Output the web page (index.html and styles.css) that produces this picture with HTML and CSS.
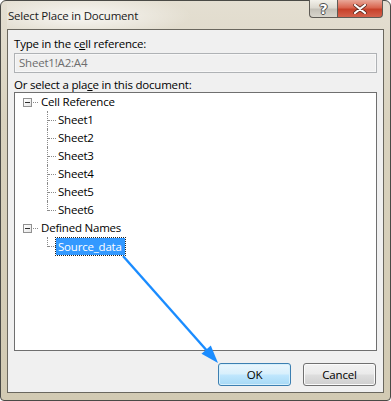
FILE: index.html
```html
<!DOCTYPE html>
<html lang="en">
<head>
  <meta charset="UTF-8">
  <title>Select Place in Document</title>
  <link rel="stylesheet" href="styles.css">
</head>
<body>
  <div class="window">
    <div class="titlebar">
      <span class="title">Select Place in Document</span>
      <div class="caption-buttons">
        <span class="cap-btn help">?</span>
        <span class="cap-btn close">
          <svg width="14" height="10" viewBox="0 0 14 10">
            <path d="M2 1 L12 9 M12 1 L2 9" stroke="#5a2a20" stroke-width="3.6" stroke-linecap="round"/>
            <path d="M2 1 L12 9 M12 1 L2 9" stroke="#ffffff" stroke-width="2.2" stroke-linecap="round"/>
          </svg>
        </span>
      </div>
    </div>

    <div class="client">
      <label class="label">Type in the c<u>e</u>ll reference:</label>
      <div class="textbox">Sheet1!A2:A4</div>

      <label class="label second">Or select a pla<u>c</u>e in this document:</label>
      <div class="tree">
        <div class="node">
          <span class="expander"></span>
          <span class="stub"></span>
          <span class="text">Cell Reference</span>
        </div>
        <div class="child"><span class="branch"></span><span class="text">Sheet1</span></div>
        <div class="child"><span class="branch"></span><span class="text">Sheet2</span></div>
        <div class="child"><span class="branch"></span><span class="text">Sheet3</span></div>
        <div class="child"><span class="branch"></span><span class="text">Sheet4</span></div>
        <div class="child"><span class="branch"></span><span class="text">Sheet5</span></div>
        <div class="child last"><span class="branch"></span><span class="text">Sheet6</span></div>
        <div class="node">
          <span class="expander"></span>
          <span class="stub"></span>
          <span class="text">Defined Names</span>
        </div>
        <div class="child last"><span class="branch"></span><span class="text selected">Source_data</span></div>
      </div>

      <div class="actions">
        <button class="btn default">OK</button>
        <button class="btn">Cancel</button>
      </div>
    </div>
  </div>

  <!-- callout arrow drawn over the dialog -->
  <svg class="callout" width="391" height="401" viewBox="0 0 391 401">
    <line x1="123" y1="256" x2="209" y2="353" stroke="#1a8cff" stroke-width="2.4"/>
    <polygon points="218,363 201.5,353.8 210.8,345.5" fill="#1a8cff"/>
  </svg>
</body>
</html>
```

FILE: styles.css
```css
html, body {
  margin: 0;
  padding: 0;
}

body {
  width: 391px;
  height: 401px;
  position: relative;
  background: #ffffff;
  font-family: "Segoe UI", "Open Sans", "Noto Sans", sans-serif;
  font-size: 11.5px;
  letter-spacing: -0.2px;
  color: #000000;
  overflow: hidden;
}

.window {
  box-sizing: border-box;
  width: 391px;
  height: 401px;
  border: 1px solid #4a4a46;
  border-radius: 6px 6px 4px 4px;
  padding: 0 6px 7px 6px;
  background: linear-gradient(180deg, #e4dfd2 0%, #d9d2be 30%, #d2cab3 100%);
  display: flex;
  flex-direction: column;
}

.titlebar {
  height: 28px;
  display: flex;
  align-items: flex-start;
  justify-content: space-between;
  background: radial-gradient(ellipse 110px 22px at 75px 15px, rgba(255, 255, 255, 0.75), rgba(255, 255, 255, 0) 100%);
}

.title {
  margin-top: 6px;
  padding-left: 1px;
  font-size: 11.5px;
  line-height: 17px;
  color: #1a1a1a;
}

.caption-buttons {
  display: flex;
  margin-top: -1px;
  margin-right: 1px;
}

.cap-btn {
  height: 18px;
  display: flex;
  align-items: center;
  justify-content: center;
  border: 1px solid #5e5b55;
  border-top: none;
  box-sizing: border-box;
}

.help {
  width: 28px;
  border-right: none;
  border-radius: 0 0 0 4px;
  background: linear-gradient(180deg, #f3f1ea 0%, #dcd9d0 45%, #c4c1b8 55%, #d8d5cc 100%);
  color: #ffffff;
  font-family: "DejaVu Sans", sans-serif;
  font-weight: bold;
  font-size: 14px;
  letter-spacing: 0;
  text-shadow: 0 0 1px #333, 1px 0 0 #555, -1px 0 0 #555, 0 1px 0 #555, 0 -1px 0 #555;
}

.close {
  width: 46px;
  border-radius: 0 0 4px 0;
  background: linear-gradient(180deg, #e9a899 0%, #d9654f 45%, #c7412a 55%, #d4634d 100%);
}

.client {
  flex: 1;
  background: #f0f0f0;
  border: 1px solid #6a675e;
  padding: 6px 6px 5px 6px;
  display: flex;
  flex-direction: column;
}

.label {
  display: block;
  line-height: 16px;
  height: 16px;
}

.label.second {
  margin-top: 4px;
  height: 15px;
  line-height: 15px;
}

.textbox {
  margin-top: 1px;
  height: 20px;
  box-sizing: border-box;
  border: 1px solid #afb2b5;
  box-shadow: inset 0 0 0 1px #f7f7f7;
  background: #f0f0f0;
  color: #6d6d6d;
  padding-left: 4px;
  line-height: 17px;
}

.tree {
  margin-top: 0;
  height: 259px;
  box-sizing: border-box;
  border: 1px solid #6f6f6f;
  background: #ffffff;
  padding-left: 8px;
}

.node {
  height: 18px;
  display: flex;
  align-items: center;
}

.expander {
  width: 9px;
  height: 9px;
  box-sizing: border-box;
  border: 1px solid #919191;
  background: linear-gradient(135deg, #ffffff 0%, #e6e6e6 100%);
  position: relative;
}

.expander::after {
  content: "";
  position: absolute;
  left: 1px;
  top: 3px;
  width: 5px;
  height: 1px;
  background: #2e2e2e;
}

.stub {
  width: 5px;
  border-top: 1px dotted #8a8a8a;
  margin-left: 1px;
}

.node .text {
  margin-left: 1px;
}

.text {
  line-height: 16px;
  padding: 0 2px;
  white-space: nowrap;
}

.child {
  height: 18px;
  display: flex;
  align-items: flex-start;
  padding-left: 24px;
}

.branch {
  width: 9px;
  height: 18px;
  box-sizing: border-box;
  border-left: 1px dotted #8a8a8a;
}

.branch::after {
  content: "";
  display: block;
  margin-top: 9px;
  border-top: 1px dotted #8a8a8a;
}

.child.last .branch {
  height: 10px;
}

.child .text {
  margin-top: 1px;
  margin-left: 0;
}

.selected {
  background: #3399ff;
  color: #ffffff;
  outline: 1px dotted #222222;
  outline-offset: 0;
  line-height: 17px;
  padding: 0 3px 0 2px;
}

.actions {
  margin-top: 12px;
  display: flex;
  justify-content: flex-end;
  gap: 12px;
  padding-right: 1px;
}

.btn {
  width: 73px;
  height: 23px;
  border: 1px solid #707070;
  border-radius: 3px;
  background: linear-gradient(180deg, #f2f2f2 0%, #ebebeb 45%, #dddddd 55%, #cfcfcf 100%);
  box-shadow: inset 0 0 0 1px #fbfbfb;
  font-family: inherit;
  font-size: 11.5px;
  letter-spacing: -0.2px;
  color: #000000;
  padding: 0;
}

.btn.default {
  border-color: #3c7fb1;
  background: linear-gradient(180deg, #eaf6fd 0%, #d9f0fc 45%, #bee6fd 55%, #a7d9f5 100%);
  box-shadow: inset 0 0 0 1px #d6f0fc;
}

.callout {
  position: absolute;
  left: 0;
  top: 0;
  pointer-events: none;
}
```
